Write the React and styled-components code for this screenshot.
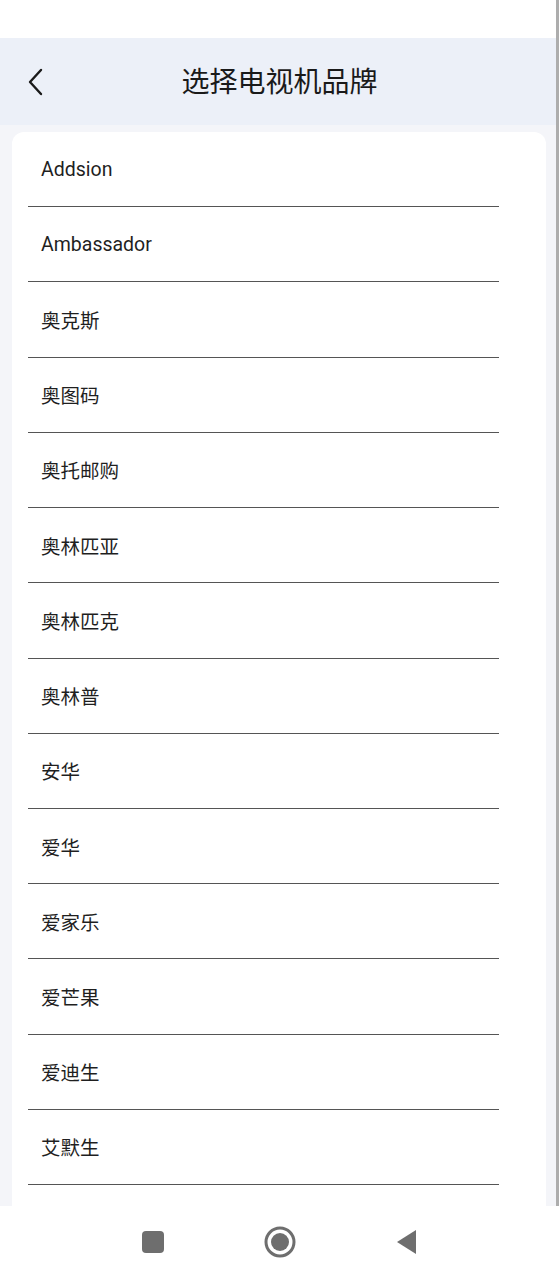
import React from "react"
import styled, { createGlobalStyle } from 'styled-components'

const GlobalStyle = createGlobalStyle`
  html, body {
    margin: 0;
    padding: 0;
    background: #ffffff;
  }
  body {
    font-family: Roboto, "Noto Sans CJK SC", sans-serif;
    color: #1f1f1f;
  }
`

const brands = [
  'Addsion',
  'Ambassador',
  '奥克斯',
  '奥图码',
  '奥托邮购',
  '奥林匹亚',
  '奥林匹克',
  '奥林普',
  '安华',
  '爱华',
  '爱家乐',
  '爱芒果',
  '爱迪生',
  '艾默生',
]

const Screen = styled.div`
  width: 559px;
  height: 1280px;
  display: flex;
  flex-direction: column;
  overflow: hidden;
`

const Upper = styled.div`
  height: 1206px;
  display: flex;
  flex-direction: column;
  border-right: 3px solid #adadad;
  box-sizing: border-box;
`

const StatusBar = styled.div`
  height: 38px;
  background: #ffffff;
  flex-shrink: 0;
`

const Header = styled.header`
  height: 87px;
  flex-shrink: 0;
  box-sizing: border-box;
  padding-bottom: 3px;
  background: #ecf0f8;
  display: flex;
  align-items: center;
  justify-content: center;
  position: relative;
`

const BackButton = styled.button`
  position: absolute;
  left: 22px;
  top: 50%;
  transform: translateY(-50%);
  border: none;
  background: none;
  padding: 4px;
  display: flex;
  cursor: pointer;
`

const Title = styled.h1`
  margin: 0 0 0 3px;
  font-size: 28px;
  font-weight: 400;
  color: #1a1a1a;
`

const Content = styled.main`
  flex: 1;
  display: flex;
  flex-direction: column;
  background: #f4f5f9;
  padding: 7px 10px 0 12px;
  overflow: hidden;
`

const Card = styled.ul`
  flex: 1;
  list-style: none;
  margin: 0;
  padding: 0 47px 0 16px;
  background: #ffffff;
  border-radius: 12px 12px 0 0;
`

const Row = styled.li`
  height: 74.23px;
  display: flex;
  align-items: center;
  padding-left: 13px;
  font-size: 19.5px;
  color: #1f1f1f;
  border-bottom: 1px solid #555555;
`

const NavBar = styled.nav`
  flex: 1;
  background: #ffffff;
  display: flex;
  align-items: center;
  justify-content: center;
  padding-bottom: 2px;
`

const NavSlot = styled.div`
  width: 127px;
  display: flex;
  justify-content: center;
`

const NavIcon = styled.svg`
  display: block;
`

function App() {
  return (
    <Screen>
      <GlobalStyle />
      <Upper>
        <StatusBar />
        <Header>
          <BackButton aria-label="返回">
            <svg width="20" height="30" viewBox="0 0 20 30">
              <path d="M15 3 L4 15 L15 27" fill="none" stroke="#1a1a1a" strokeWidth="2.4" strokeLinecap="round" strokeLinejoin="round" />
            </svg>
          </BackButton>
          <Title>选择电视机品牌</Title>
        </Header>
        <Content>
          <Card>
            {brands.map((b) => (
              <Row key={b}>{b}</Row>
            ))}
          </Card>
        </Content>
      </Upper>
      <NavBar>
        <NavSlot>
          <NavIcon width="24" height="24" viewBox="0 0 24 24">
            <rect x="1" y="1" width="22" height="22" rx="4" fill="#6e6e6e" />
          </NavIcon>
        </NavSlot>
        <NavSlot>
          <NavIcon width="34" height="34" viewBox="0 0 34 34">
            <circle cx="17" cy="17" r="14" fill="none" stroke="#6e6e6e" strokeWidth="3" />
            <circle cx="17" cy="17" r="9" fill="#6e6e6e" />
          </NavIcon>
        </NavSlot>
        <NavSlot>
          <NavIcon width="24" height="28" viewBox="0 0 24 28">
            <path d="M21 2 L21 26 L2 14 Z" fill="#6e6e6e" />
          </NavIcon>
        </NavSlot>
      </NavBar>
    </Screen>
  )
}

export default App
